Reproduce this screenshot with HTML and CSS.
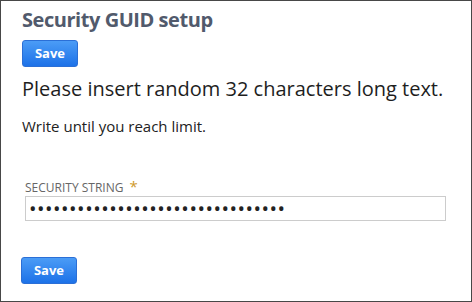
FILE: index.html
```html
<!DOCTYPE html>
<html>
<head>
<meta charset="utf-8">
<link rel="stylesheet" href="styles.css">
</head>
<body>
<div class="frame">
  <h1 class="title">Security GUID setup</h1>
  <button class="btn">Save</button>
  <p class="lead">Please insert random 32 characters long text.</p>
  <p class="hint">Write until you reach limit.</p>
  <div class="field">
    <label class="label">SECURITY STRING <span class="req">*</span></label>
    <input class="input" type="password" value="abcdefghijklmnopqrstuvwxyz123456">
  </div>
  <button class="btn btn-bottom">Save</button>
</div>
</body>
</html>
```

FILE: styles.css
```css
* { box-sizing: border-box; }
html, body { margin: 0; padding: 0; background: #fff; }
body { font-family: "Open Sans", "Liberation Sans", sans-serif; }
.frame {
  width: 472px;
  height: 302px;
  border: 1px solid #474747;
  padding: 5px 21px 0 21px;
  display: flex;
  flex-direction: column;
  align-items: flex-start;
}
.title {
  margin: 0;
  font-size: 20px;
  line-height: 28px;
  font-weight: 700;
  letter-spacing: -0.45px;
  color: #515a6c;
}
.btn {
  margin-top: 6px;
  height: 27px;
  width: 56px;
  padding: 0;
  border: 1px solid #2b6fd6;
  border-radius: 3px;
  background: linear-gradient(#4b9cf6, #1d72e8);
  color: #fff;
  font-family: "Open Sans", "Liberation Sans", sans-serif;
  font-weight: 700;
  font-size: 13px;
  line-height: 25px;
}
.lead {
  margin: 9px 0 0;
  font-size: 20px;
  line-height: 26px;
  color: #1e1e1e;
}
.hint {
  margin: 14px 0 0;
  font-size: 15px;
  line-height: 20px;
  color: #222;
}
.field {
  margin-top: 42px;
  padding-left: 3px;
  width: 424px;
  display: flex;
  flex-direction: column;
}
.label {
  font-size: 12px;
  line-height: 16px;
  color: #666;
}
.req {
  color: #cf9a2c;
  font-size: 15px;
  margin-left: 3px;
}
.input {
  margin: 0;
  height: 25px;
  width: 421px;
  border: 1px solid #cccccc;
  padding: 0 3px;
  font-family: "Open Sans", "Liberation Sans", sans-serif;
  font-size: 20px;
  letter-spacing: 0.5px;
  color: #222;
  outline: none;
}
.btn-bottom {
  margin-top: 36px;
  margin-left: -1px;
}
```
